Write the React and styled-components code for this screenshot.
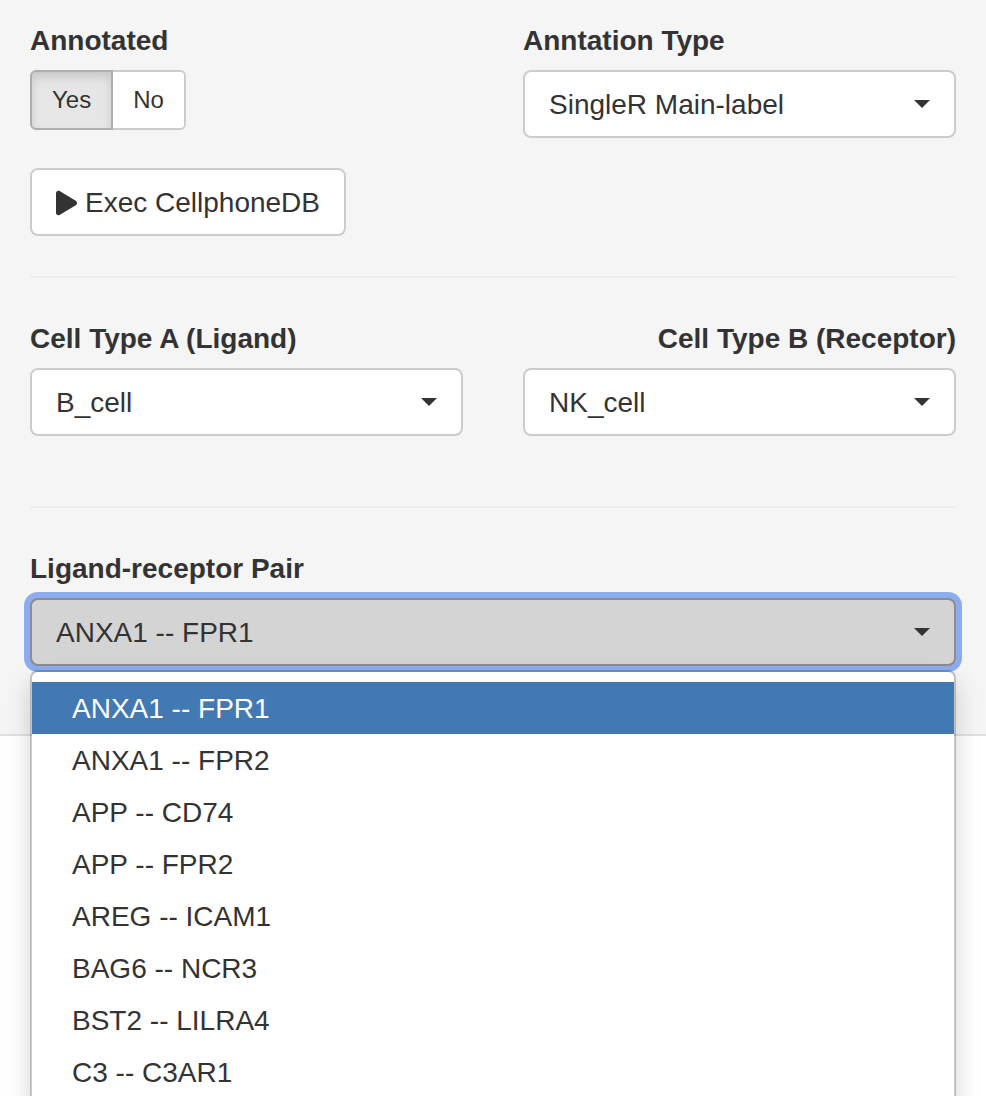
import React, { useState } from "react";
import styled, { createGlobalStyle, css } from "styled-components";
import { FaPlay } from "react-icons/fa6";

const GlobalStyle = createGlobalStyle`
  *, *::before, *::after { box-sizing: border-box; }
  body {
    margin: 0;
    background: #fff;
    color: #333;
    font-family: "Liberation Sans", Arial, sans-serif;
    font-size: 28px;
    line-height: 40px;
  }
`;

const Page = styled.div`
  min-height: 100vh;
`;

const Panel = styled.main`
  padding: 20px 30px 68px;
  background: #f5f5f5;
  border-bottom: 2px solid #e0e0e0;
`;

const Columns = styled.div`
  display: grid;
  grid-template-columns: 1fr 1fr;
  gap: 60px;
`;

const Field = styled.div`
  display: flex;
  flex-direction: column;
  gap: 8px;
`;

const fieldLabel = css`
  font-weight: 700;
  line-height: 42px;
  text-align: ${({ $align }) => $align || "left"};
`;

const FieldLabel = styled.label`
  ${fieldLabel}
`;

const ToggleField = styled.fieldset`
  margin: 0;
  padding: 0;
  border: 0;
  min-width: 0;
`;

const Legend = styled.legend`
  ${fieldLabel}
  padding: 0;
  margin-bottom: 8px;
`;

const ToggleGroup = styled.div`
  display: flex;
`;

const ToggleOption = styled.label`
  position: relative;
  padding: 10px 20px;
  border: 2px solid #ccc;
  background: #fff;
  font-size: 24px;
  line-height: 36px;
  cursor: pointer;

  &:first-child { border-radius: 6px 0 0 6px; }
  &:last-child { border-radius: 0 6px 6px 0; }
  & + & { margin-left: -2px; }

  &:has(input:checked) {
    z-index: 1;
    background: #e6e6e6;
    border-color: #adadad;
    box-shadow: inset 0 6px 10px rgba(0, 0, 0, 0.125);
  }
`;

const HiddenRadio = styled.input`
  position: absolute;
  inset: 0;
  margin: 0;
  opacity: 0;
  cursor: pointer;
`;

const ExecButton = styled.button`
  display: inline-flex;
  align-items: center;
  gap: 8px;
  margin-top: 38px;
  padding: 13px 24px 11px;
  border: 2px solid #ccc;
  border-radius: 8px;
  background: #fff;
  color: inherit;
  font: inherit;
  cursor: pointer;

  svg { width: 21px; height: 28px; }
`;

const Divider = styled.hr`
  margin: 40px 0;
  border: 0;
  border-top: 2px solid #eee;
`;

const SelectBox = styled.div`
  position: relative;
`;

const Select = styled.select`
  display: block;
  width: 100%;
  padding: 13px 56px 11px 24px;
  appearance: none;
  border: 2px solid ${({ $open }) => ($open ? "#8c8c8c" : "#ccc")};
  border-radius: 8px;
  background: ${({ $open }) => ($open ? "#d4d4d4" : "#fff")};
  box-shadow: ${({ $open }) => ($open ? "0 0 0 6px #8badf0" : "none")};
  color: inherit;
  font: inherit;
  outline: none;
  cursor: pointer;
`;

const Caret = styled.span`
  position: absolute;
  top: 30px;
  right: 26px;
  border: 8px solid transparent;
  border-top-color: #333;
  border-bottom: 0;
  pointer-events: none;
`;

const Menu = styled.ul`
  position: absolute;
  z-index: 2;
  top: calc(100% + 4px);
  left: 0;
  width: 100%;
  margin: 0;
  padding: 10px 0;
  list-style: none;
  border: 2px solid rgba(0, 0, 0, 0.2);
  border-radius: 8px;
  background: #fff;
  background-clip: padding-box;
  box-shadow: 0 12px 24px rgba(0, 0, 0, 0.175);
`;

const MenuItem = styled.li`
  padding: 7px 40px 5px;
  background: ${({ $active }) => ($active ? "#4379b2" : "transparent")};
  color: ${({ $active }) => ($active ? "#fff" : "inherit")};
  cursor: pointer;
`;

const LowerColumns = styled(Columns)`
  margin-bottom: 70px;
`;

const PAIRS = [
  "ANXA1 -- FPR1",
  "ANXA1 -- FPR2",
  "APP -- CD74",
  "APP -- FPR2",
  "AREG -- ICAM1",
  "BAG6 -- NCR3",
  "BST2 -- LILRA4",
  "C3 -- C3AR1",
];

function SelectField({ id, label, options, align }) {
  return (
    <Field>
      <FieldLabel htmlFor={id} $align={align}>{label}</FieldLabel>
      <SelectBox>
        <Select id={id}>
          {options.map((option) => <option key={option}>{option}</option>)}
        </Select>
        <Caret />
      </SelectBox>
    </Field>
  );
}

function PairField() {
  const [open, setOpen] = useState(true);
  const [pair, setPair] = useState(PAIRS[0]);

  const toggle = (event) => {
    event.preventDefault();
    setOpen(!open);
  };
  const choose = (value) => {
    setPair(value);
    setOpen(false);
  };

  return (
    <Field>
      <FieldLabel htmlFor="pair">Ligand-receptor Pair</FieldLabel>
      <SelectBox>
        <Select
          id="pair"
          $open={open}
          value={pair}
          onMouseDown={toggle}
          onChange={(event) => choose(event.target.value)}
        >
          {PAIRS.map((value) => <option key={value}>{value}</option>)}
        </Select>
        <Caret />
        {open && (
          <Menu role="listbox" aria-label="Ligand-receptor Pair">
            {PAIRS.map((value) => (
              <MenuItem
                key={value}
                role="option"
                aria-selected={value === pair}
                $active={value === pair}
                onClick={() => choose(value)}
              >
                {value}
              </MenuItem>
            ))}
          </Menu>
        )}
      </SelectBox>
    </Field>
  );
}

export default function App() {
  return (
    <Page>
      <GlobalStyle />
      <Panel>
        <Columns>
          <ToggleField>
            <Legend>Annotated</Legend>
            <ToggleGroup>
              <ToggleOption>
                <HiddenRadio type="radio" name="annotated" defaultChecked />
                Yes
              </ToggleOption>
              <ToggleOption>
                <HiddenRadio type="radio" name="annotated" />
                No
              </ToggleOption>
            </ToggleGroup>
            <ExecButton type="button">
              <FaPlay aria-hidden="true" />
              Exec CellphoneDB
            </ExecButton>
          </ToggleField>
          <SelectField id="annotation" label="Anntation Type" options={["SingleR Main-label"]} />
        </Columns>
        <Divider />
        <LowerColumns>
          <SelectField id="ligand" label="Cell Type A (Ligand)" options={["B_cell", "NK_cell"]} />
          <SelectField
            id="receptor"
            label="Cell Type B (Receptor)"
            options={["NK_cell", "B_cell"]}
            align="right"
          />
        </LowerColumns>
        <Divider />
        <PairField />
      </Panel>
    </Page>
  );
}
